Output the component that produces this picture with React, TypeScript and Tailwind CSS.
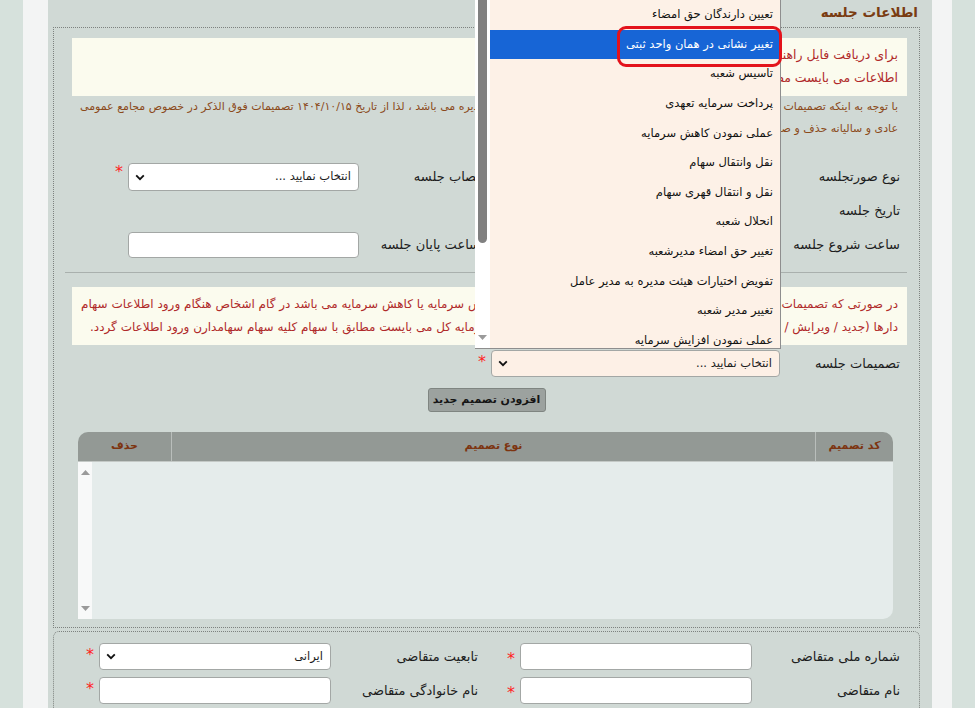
import React from 'react'

// گزینه‌های باز شده‌ی لیست تصمیمات جلسه
const DECISIONS = [
  'تعیین دارندگان حق امضاء',
  'تغییر نشانی در همان واحد ثبتی',
  'تاسیس شعبه',
  'پرداخت سرمایه تعهدی',
  'عملی نمودن کاهش سرمایه',
  'نقل وانتقال سهام',
  'نقل و انتقال قهری سهام',
  'انحلال شعبه',
  'تغییر حق امضاء مدیرشعبه',
  'تفویض اختیارات هیئت مدیره به مدیر عامل',
  'تغییر مدیر شعبه',
  'عملی نمودن افزایش سرمایه',
]

function Star() {
  return <span className="ms-[5px] self-start mt-[4px] text-[16px] leading-none text-[#ff1f1f]">*</span>
}

function Chevron() {
  return (
    <svg width="10" height="7" viewBox="0 0 10 7" className="shrink-0">
      <path d="M1.2 1.3 L5 5.2 L8.8 1.3" fill="none" stroke="#111" strokeWidth="1.8" />
    </svg>
  )
}

function SelectBox({ text, className }: { text: string; className: string }) {
  return (
    <div className={'flex items-center justify-between rounded-[4px] border border-[#a3a7a5] pr-[7px] pl-[6px] ' + className}>
      <span className="text-[11.5px]">{text}</span>
      <Chevron />
    </div>
  )
}

function TextBox({ className }: { className: string }) {
  return <div className={'rounded-[4px] border border-[#a3a7a5] bg-white ' + className} />
}

function ScrollArrow({ up }: { up?: boolean }) {
  return (
    <svg width="9" height="5" viewBox="0 0 9 5">
      <path d={up ? 'M0 5 L4.5 0 L9 5 Z' : 'M0 0 L4.5 5 L9 0 Z'} fill="#9a9a9a" />
    </svg>
  )
}

export default function App() {
  return (
    <div dir="rtl" className="relative h-[708px] overflow-hidden bg-[#d6e1dc] px-[23px] font-['DejaVu_Sans',sans-serif] text-[13px] text-[#1d1d1d]">
      <div className="h-full bg-[#f3f4f4] pr-[20px] pl-[25px]">
        <div className="h-full bg-[#d0d9d5] pr-[12px] pl-[5px]">
          <h2 className="flex h-[25px] items-center pr-[2px] text-[13.5px] font-bold text-[#7a3c12]">اطلاعات جلسه</h2>

          {/* بخش اول: اطلاعات جلسه */}
          <div className="mt-[2px] border border-dotted border-[#7d827f] pb-[8px]">
            <div className="mt-[10px] mr-[12px] ml-[18px] h-[58px] overflow-hidden bg-[#fbfbee] px-[9px] pt-[5px] text-[12.5px] leading-[23px] text-[#b02a2a]">
              <p>برای دریافت فایل راهنما کلیک نمایید.</p>
              <p>اطلاعات می بایست مطابق با صورتجلسه ثبت گردد.</p>
            </div>

            <div className="mr-[21px] ml-[26px] text-[11px] leading-[22px] text-[#8b4a1a]">
              <p className="flex justify-between whitespace-nowrap">
                <span>با توجه به اینکه تصمیمات تعیین دارندگان حق امضاء</span>
                <span>و اعضای هیئت مدیره می باشد ، لذا از تاریخ ۱۴۰۴/۱۰/۱۵ تصمیمات فوق الذکر در خصوص مجامع عمومی</span>
              </p>
              <p>عادی و سالیانه حذف و صرفا در مجامع فوق العاده ثبت گردد.</p>
            </div>

            <div className="mt-[20px]">
              <div className="flex h-[34px] items-center">
                <div className="w-[139px] pr-[19px]">نوع صورتجلسه</div>
                <div className="w-[300px]"><SelectBox text="انتخاب نمایید ..." className="h-[28px] w-[289px] bg-white" /></div>
                <div className="w-[121px]">نصاب جلسه</div>
                <SelectBox text="انتخاب نمایید ..." className="h-[28px] w-[231px] bg-white" />
                <Star />
              </div>
              <div className="flex h-[34px] items-center">
                <div className="w-[139px] pr-[19px]">تاریخ جلسه</div>
                <div className="w-[300px]"><TextBox className="h-[26px] w-[289px]" /></div>
              </div>
              <div className="flex h-[34px] items-center">
                <div className="w-[139px] pr-[19px]">ساعت شروع جلسه</div>
                <div className="w-[300px]"><TextBox className="h-[26px] w-[289px]" /></div>
                <div className="w-[121px]">ساعت پایان جلسه</div>
                <TextBox className="h-[26px] w-[231px]" />
              </div>
            </div>

            <div className="mt-[10px] mr-[12px] ml-[11px] h-px bg-[#a9b0ad]" />

            <div className="mt-[14px] mr-[12px] ml-[18px] h-[58px] overflow-hidden bg-[#fbfbee] px-[9px] pt-[6px] text-[12px] leading-[23px] text-[#b02a2a]">
              <p className="flex justify-between whitespace-nowrap">
                <span>در صورتی که تصمیمات صورتجلسه</span>
                <span>شامل افزایش سرمایه یا کاهش سرمایه می باشد در گام اشخاص هنگام ورود اطلاعات سهام</span>
              </p>
              <p className="flex justify-between whitespace-nowrap pl-[9px]">
                <span>دارها (جدید / ویرایش / حذف) تعداد سهام</span>
                <span>به موجب سرمایه کل می بایست مطابق با سهام کلیه سهام سهامدارن ورود اطلاعات گردد.</span>
              </p>
            </div>

            <div className="mt-[5px] flex h-[27px] items-center">
              <div className="w-[139px] pr-[19px]">تصمیمات جلسه</div>
              <SelectBox text="انتخاب نمایید ..." className="h-[27px] w-[289px] bg-[#fdf0e6]" />
              <Star />
            </div>

            <div className="mt-[11px] flex justify-center">
              <button className="h-[24px] w-[118px] whitespace-nowrap rounded-[3px] border border-[#7f8581] bg-[#9ca29f] text-[11px] font-bold text-[#151515]">
                افزودن تصمیم جدید
              </button>
            </div>

            {/* جدول تصمیمات */}
            <div className="mt-[20px] mr-[26px] ml-[24px]">
              <div className="flex h-[29px] overflow-hidden rounded-t-[10px] bg-[#939995] text-[11px] font-bold text-[#7d3410]">
                <div className="flex w-[78px] items-center justify-center border-l border-[#b9bebb]">کد تصمیم</div>
                <div className="flex w-[644px] items-center justify-center border-l border-[#b9bebb]">نوع تصمیم</div>
                <div className="flex flex-1 items-center justify-center">حذف</div>
              </div>
              <div className="flex h-[158px] overflow-hidden rounded-br-[10px] border-t border-[#c4c9c6] bg-[#e5eceb]">
                <div className="flex-1" />
                <div className="flex w-[14px] flex-col items-center justify-between bg-[#f8f9f9] py-[8px]">
                  <ScrollArrow up />
                  <ScrollArrow />
                </div>
              </div>
            </div>
          </div>

          {/* بخش دوم: اطلاعات متقاضی */}
          <div className="mt-[3px] rounded-t-[6px] border border-dotted border-[#7d827f] pt-[11px]">
            <div className="flex h-[27px] items-center">
              <div className="w-[167px] pr-[19px]">شماره ملی متقاضی</div>
              <TextBox className="h-[27px] w-[232px]" />
              <div className="flex w-[42px]"><Star /></div>
              <div className="w-[147px]">تابعیت متقاضی</div>
              <SelectBox text="ایرانی" className="h-[27px] w-[232px] bg-white" />
              <Star />
            </div>
            <div className="mt-[7px] flex h-[27px] items-center">
              <div className="w-[167px] pr-[19px]">نام متقاضی</div>
              <TextBox className="h-[27px] w-[232px]" />
              <div className="flex w-[42px]"><Star /></div>
              <div className="w-[147px]">نام خانوادگی متقاضی</div>
              <TextBox className="h-[27px] w-[232px]" />
              <Star />
            </div>
            <div className="h-[20px]" />
          </div>
        </div>
      </div>

      {/* لیست باز شده‌ی تصمیمات */}
      <div className="absolute top-0 left-[475px] flex h-[349px] w-[306px] border-r border-b border-[#8e8e8e] bg-[#fdf1e7]">
        <div className="flex-1 overflow-hidden">
          {DECISIONS.map((d, i) => (
            <div
              key={d}
              className={
                'flex h-[29.6px] items-center pr-[7px] text-[11.5px] ' +
                (i === 1 ? 'bg-[#1765d6] text-white' : 'text-[#111]')
              }
            >
              {d}
            </div>
          ))}
        </div>
        <div className="flex w-[15px] flex-col items-center bg-white">
          <div className="h-[243px] w-[9px] rounded-b-full bg-[#808080]" />
          <div className="flex-1" />
          <div className="mb-[8px]"><ScrollArrow /></div>
        </div>
      </div>
      <div className="absolute top-[26px] left-[617px] h-[41px] w-[165px] rounded-[9px] border-[3px] border-[#e3121b]" />
    </div>
  )
}
